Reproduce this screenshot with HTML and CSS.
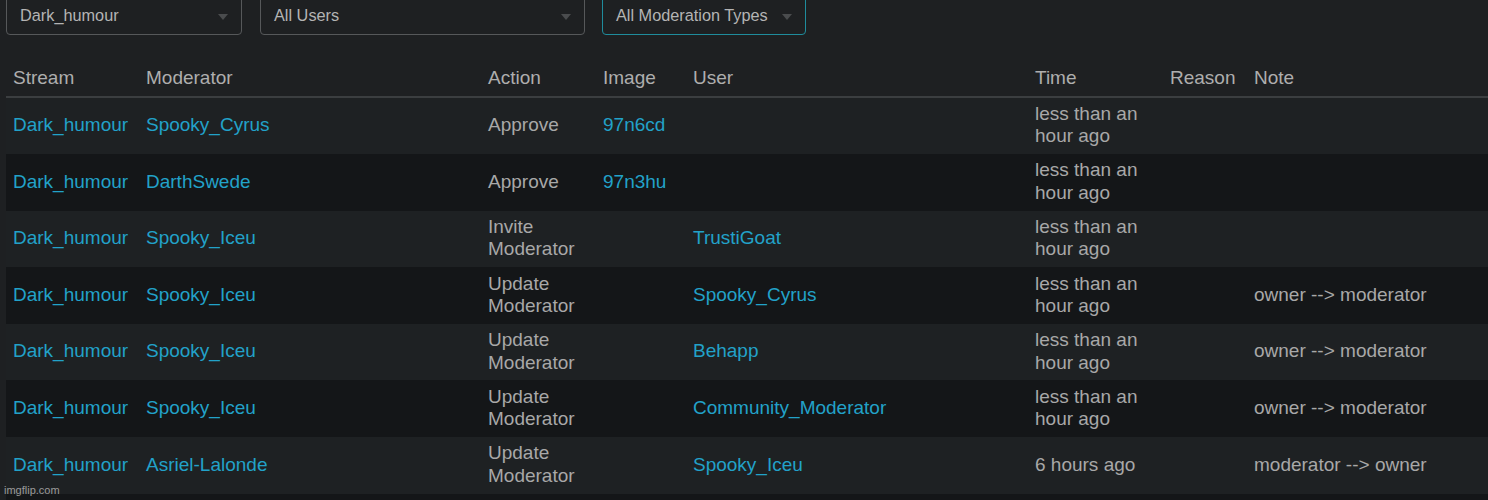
FILE: index.html
```html
<!DOCTYPE html>
<html>
<head>
<meta charset="utf-8">
<link rel="stylesheet" href="styles.css">
</head>
<body>
<div class="filters">
  <div class="select s1"><span>Dark_humour</span><i class="arrow"></i></div>
  <div class="select s2"><span>All Users</span><i class="arrow"></i></div>
  <div class="select s3 focused"><span>All Moderation Types</span><i class="arrow"></i></div>
</div>
<table class="log">
  <colgroup>
    <col class="c-stream"><col class="c-mod"><col class="c-action"><col class="c-image"><col class="c-user"><col class="c-time"><col class="c-reason"><col class="c-note">
  </colgroup>
  <thead>
    <tr><th>Stream</th><th>Moderator</th><th>Action</th><th>Image</th><th>User</th><th>Time</th><th>Reason</th><th>Note</th></tr>
  </thead>
  <tbody>
    <tr><td><a>Dark_humour</a></td><td><a>Spooky_Cyrus</a></td><td>Approve</td><td><a>97n6cd</a></td><td></td><td>less than an hour ago</td><td></td><td></td></tr>
    <tr><td><a>Dark_humour</a></td><td><a>DarthSwede</a></td><td>Approve</td><td><a>97n3hu</a></td><td></td><td>less than an hour ago</td><td></td><td></td></tr>
    <tr><td><a>Dark_humour</a></td><td><a>Spooky_Iceu</a></td><td>Invite Moderator</td><td></td><td><a>TrustiGoat</a></td><td>less than an hour ago</td><td></td><td></td></tr>
    <tr><td><a>Dark_humour</a></td><td><a>Spooky_Iceu</a></td><td>Update Moderator</td><td></td><td><a>Spooky_Cyrus</a></td><td>less than an hour ago</td><td></td><td>owner --&gt; moderator</td></tr>
    <tr><td><a>Dark_humour</a></td><td><a>Spooky_Iceu</a></td><td>Update Moderator</td><td></td><td><a>Behapp</a></td><td>less than an hour ago</td><td></td><td>owner --&gt; moderator</td></tr>
    <tr><td><a>Dark_humour</a></td><td><a>Spooky_Iceu</a></td><td>Update Moderator</td><td></td><td><a>Community_Moderator</a></td><td>less than an hour ago</td><td></td><td>owner --&gt; moderator</td></tr>
    <tr><td><a>Dark_humour</a></td><td><a>Asriel-Lalonde</a></td><td>Update Moderator</td><td></td><td><a>Spooky_Iceu</a></td><td>6 hours ago</td><td></td><td>moderator --&gt; owner</td></tr>
    <tr class="empty"><td></td><td></td><td></td><td></td><td></td><td></td><td></td><td></td></tr>
  </tbody>
</table>
<div class="watermark">imgflip.com</div>
</body>
</html>
```
FILE: styles.css
```css
html, body {
  margin: 0;
  padding: 0;
}
body {
  background: #1e2022;
  font-family: "Liberation Sans", Arial, sans-serif;
  color: #a9a9a9;
  overflow: hidden;
  width: 1488px;
  height: 500px;
  position: relative;
}
.filters {
  display: flex;
  gap: 18px;
  padding-left: 6px;
  margin-top: -4px;
}
.select {
  box-sizing: border-box;
  height: 39px;
  border: 1px solid #56585a;
  border-radius: 4px;
  display: flex;
  align-items: center;
  padding: 0 13px 0 13px;
  font-size: 16.3px;
  color: #b4b4b4;
  justify-content: space-between;
}
.s1 { width: 236px; }
.s2 { width: 325px; }
.s3 { width: 204px; margin-left: -1px; }
.focused { border-color: #1f8c9c; }
.arrow {
  width: 0;
  height: 0;
  border-left: 5px solid transparent;
  border-right: 5px solid transparent;
  border-top: 6px solid #4a4c4e;
  margin-top: 2px;
}
.log {
  margin-top: 23px;
  margin-left: 6px;
  border-collapse: collapse;
  table-layout: fixed;
  width: 1490px;
  font-size: 19px;
  line-height: 22.5px;
}
.c-stream { width: 133px; }
.c-mod { width: 342px; }
.c-action { width: 115px; }
.c-image { width: 90px; }
.c-user { width: 342px; }
.c-time { width: 135px; }
.c-reason { width: 84px; }
.c-note { width: 249px; }
th {
  text-align: left;
  font-weight: normal;
  color: #aeaeae;
  padding: 9px 7px 6px;
  border-bottom: 2px solid #3b3e40;
}
td {
  padding: 5px 7px 6px;
  height: 45.6px;
  vertical-align: middle;
  color: #a8a8a8;
}
tbody tr:nth-child(odd) { background: #1e2123; }
tbody tr:nth-child(even) { background: #141618; }
a {
  color: #22a2c9;
  text-decoration: none;
}
.watermark {
  position: absolute;
  left: 4px;
  top: 484px;
  font-size: 11px;
  color: #9a9a9a;
}
```
